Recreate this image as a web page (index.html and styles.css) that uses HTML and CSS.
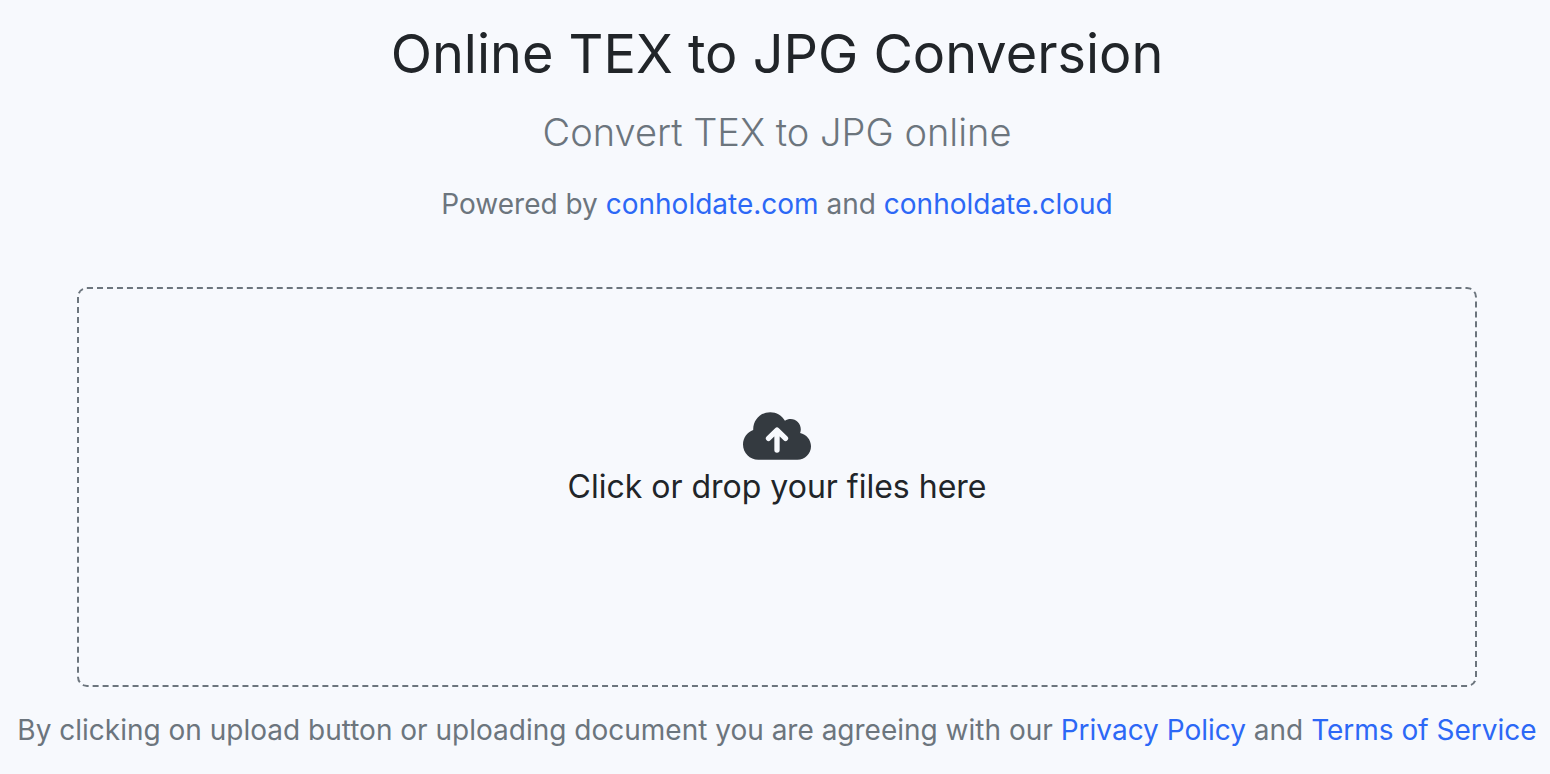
FILE: index.html
```html
<!DOCTYPE html>
<html lang="en">
<head>
    <meta charset="UTF-8">
    <meta name="viewport" content="width=device-width, initial-scale=1.0">
    <title>Online TEX to JPG Conversion</title>
    <link rel="stylesheet" href="styles.css">
</head>
<body>
    <main class="converter">
        <h1>Online TEX to JPG Conversion</h1>
        <h2>Convert TEX to JPG online</h2>
        <p class="powered">Powered by <a href="#">conholdate.com</a> and <a href="#">conholdate.cloud</a></p>

        <form class="upload-form">
            <input type="file" id="fileInput" class="file-input" multiple>
            <label for="fileInput" class="drop-area">
                <svg class="upload-icon" viewBox="0 0 640 448" aria-hidden="true">
                    <path fill="currentColor" d="M144 448C64.500 448 0 383.500 0 304C0 241.200 40.200 187.800 96.200 168.300C96.100 165.600 96 162.800 96 160C96 71.600 167.600 0 256 0C315.300 0 367 32.200 394.700 80.200C409.900 70 428.300 64 448 64C501 64 544 107 544 160C544 172.200 541.700 183.800 537.600 194.600C596 206.400 640 258.100 640 320C640 390.700 582.700 448 512 448H144Z"/>
                    <path fill="none" stroke="#f7f9fd" stroke-width="50" stroke-linecap="round" stroke-linejoin="round" d="M240 247L320 168L400 247M320 174V356"/>
                </svg>
                <span>Click or drop your files here</span>
            </label>
        </form>

        <p class="terms">By clicking on upload button or uploading document you are agreeing with our <a href="#">Privacy Policy</a> and <a href="#">Terms of Service</a></p>
    </main>
</body>
</html>
```
FILE: styles.css
```css
body {
    margin: 0;
    background-color: #f7f9fd;
    color: #212529;
    font-family: Inter, "Liberation Sans", sans-serif;
    font-size: 28px;
    line-height: 42px;
}

.converter {
    padding: 20px 0 0 4px;
    text-align: center;
}

h1 {
    margin: 0 0 16px;
    font-size: 54px;
    font-weight: 400;
    line-height: 68px;
}

h2 {
    margin: 0 0 22px;
    color: #6c757d;
    font-size: 38px;
    font-weight: 300;
    line-height: 57px;
}

p {
    margin: 0;
    color: #6c757d;
}

a {
    color: #2c68f6;
    text-decoration: none;
}

a:hover {
    text-decoration: underline;
}

.upload-form {
    position: relative;
    margin: 62px 73px 22px;
}

.file-input {
    position: absolute;
    opacity: 0;
    pointer-events: none;
}

.drop-area {
    display: flex;
    flex-direction: column;
    align-items: center;
    box-sizing: border-box;
    min-height: 400px;
    padding: 123px 20px 20px;
    border: 2px dashed #6c757d;
    border-radius: 10px;
    font-size: 32px;
    line-height: 48px;
    cursor: pointer;
}

.upload-icon {
    width: 68px;
    height: 48px;
    margin-bottom: 3px;
    color: #343a40;
}
```
